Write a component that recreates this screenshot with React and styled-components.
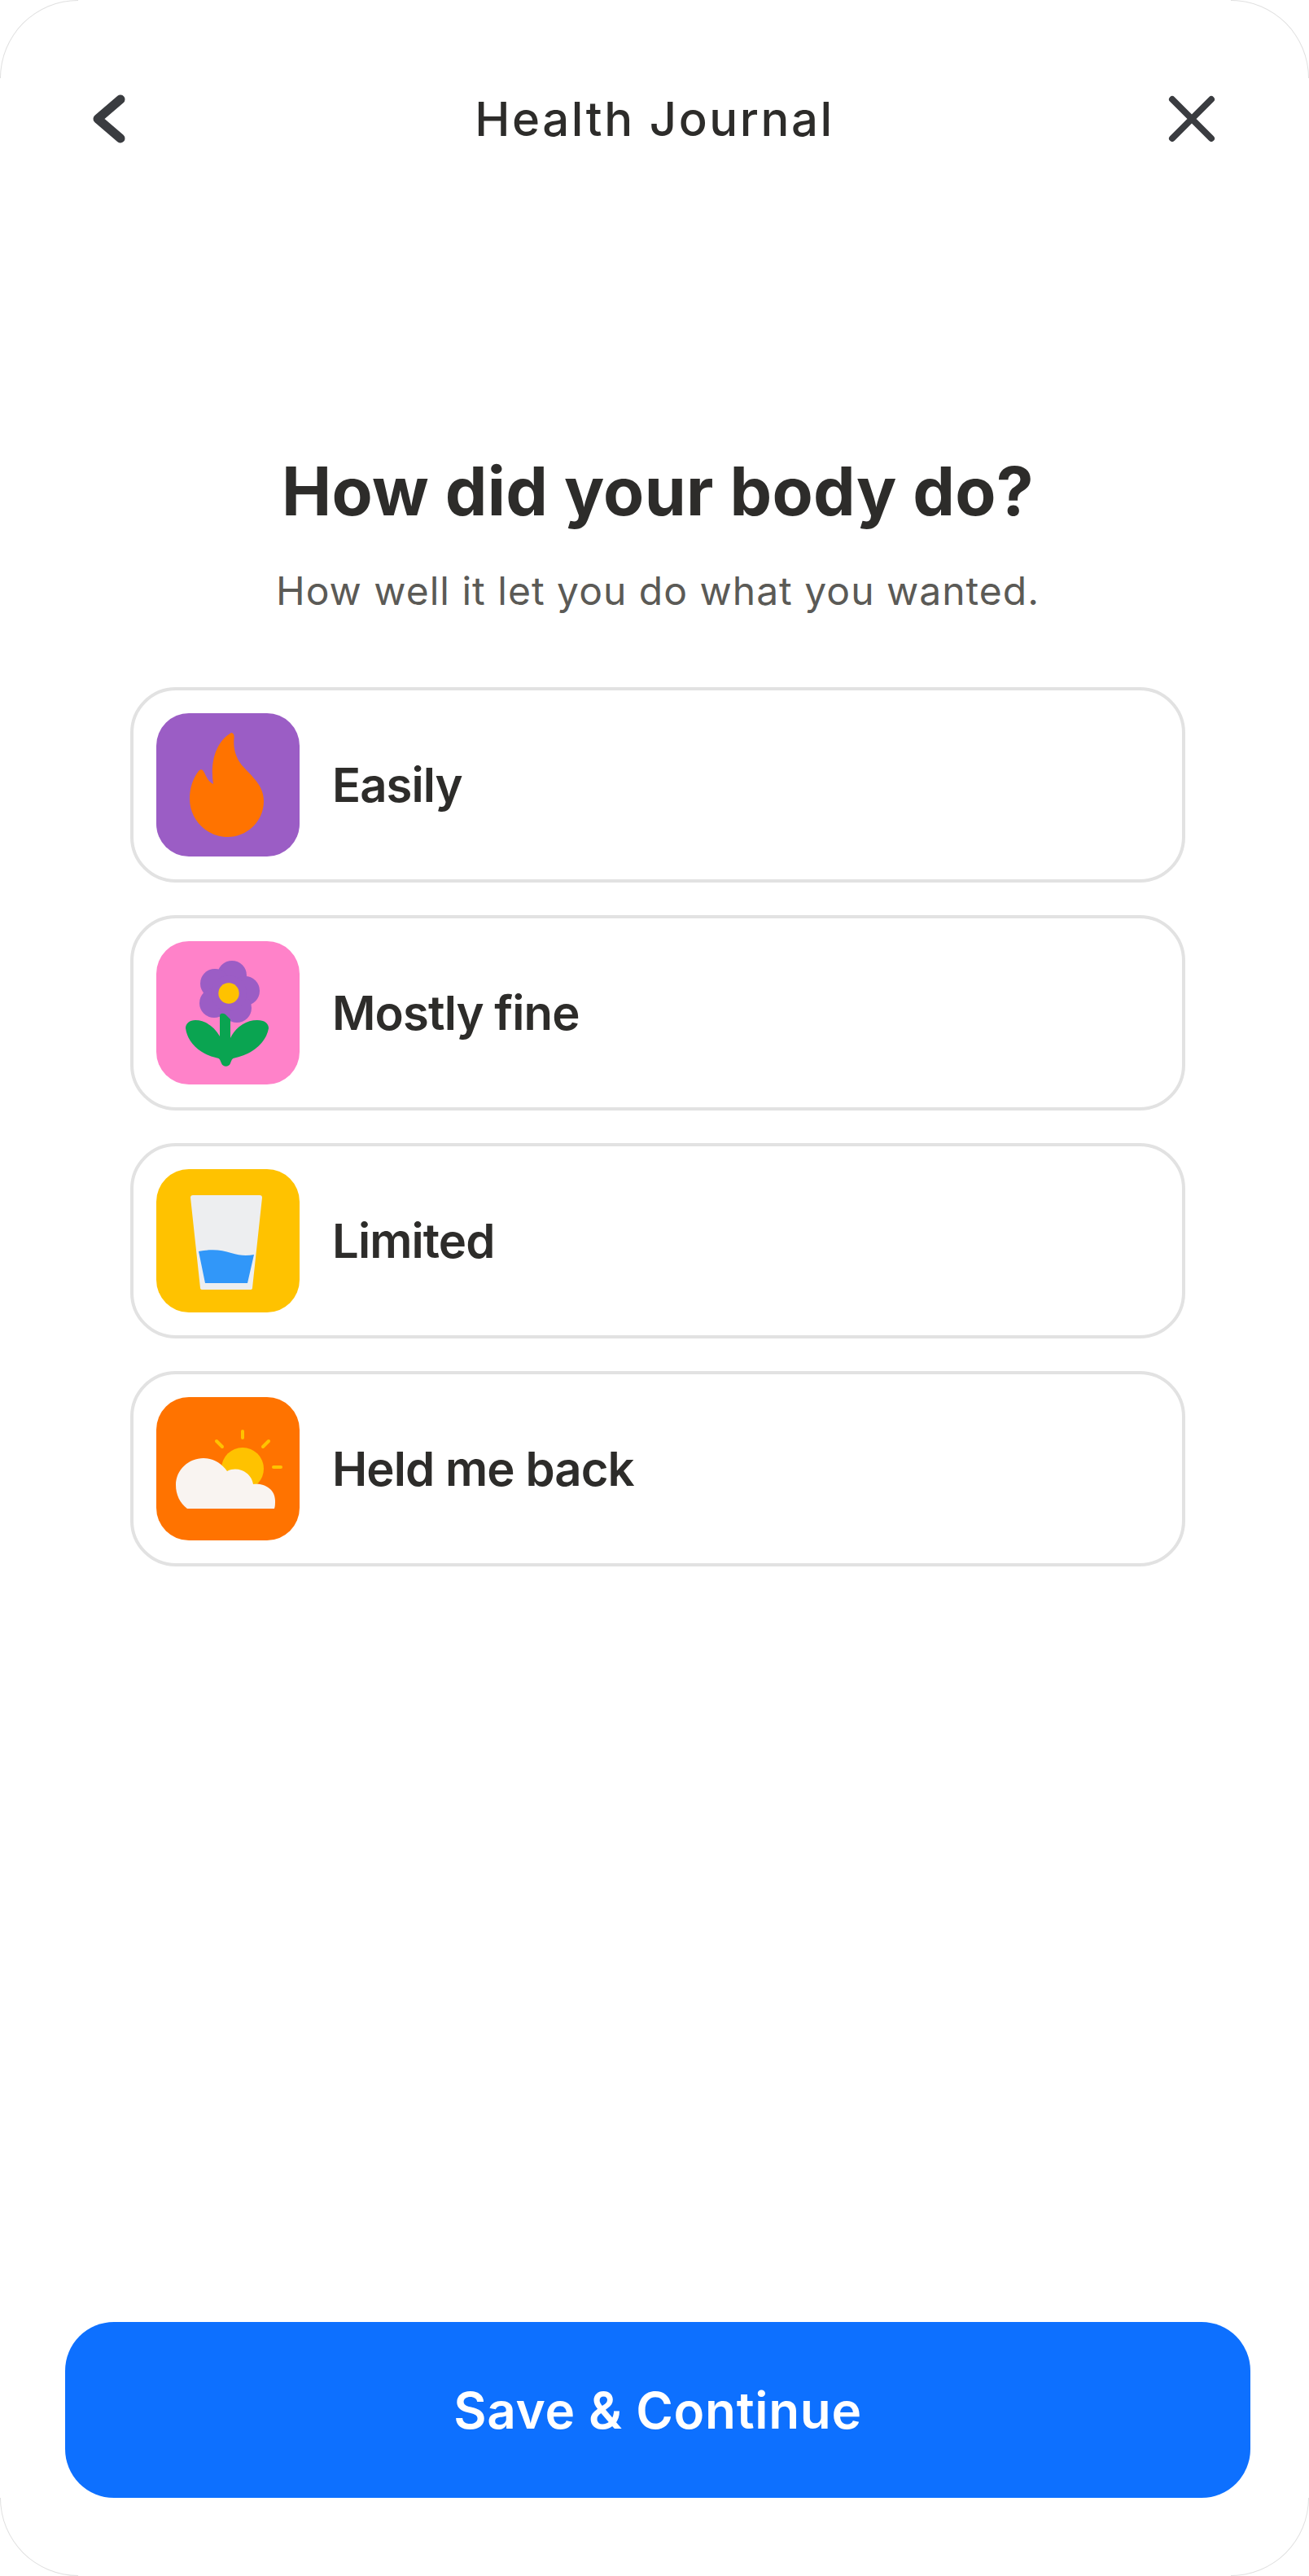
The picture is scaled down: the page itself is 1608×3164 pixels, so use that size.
import React from 'react'
import styled, { createGlobalStyle } from 'styled-components'

const GlobalStyle = createGlobalStyle`
  html, body {
    margin: 0;
    padding: 0;
    background: #ffffff;
  }
  * {
    box-sizing: border-box;
  }
`

const Screen = styled.div`
  position: relative;
  width: 1608px;
  height: 3164px;
  background: #ffffff;
  display: flex;
  flex-direction: column;
  font-family: Inter, "Liberation Sans", sans-serif;
  color: #2d2c2a;
`

// the faint arcs left at the four corners of the phone frame
const Corner = styled.span`
  position: absolute;
  width: 96px;
  height: 96px;
  ${(props) => props.$v}: 0;
  ${(props) => props.$h}: 0;
  border-${(props) => props.$v}: 1px solid #e0e0e0;
  border-${(props) => props.$h}: 1px solid #e0e0e0;
  border-${(props) => props.$v}-${(props) => props.$h}-radius: 96px;
`

const Header = styled.header`
  height: 120px;
  margin-top: 86px;
  padding: 0 112px 0 105px;
  display: flex;
  align-items: center;
  justify-content: space-between;
`

const HeaderTitle = styled.div`
  margin-left: 7px;
  font-size: 58px;
  font-weight: 500;
  letter-spacing: 2.6px;
  color: #2d2c2a;
`

const IconButton = styled.button`
  width: 64px;
  height: 64px;
  padding: 0;
  border: none;
  background: none;
  color: #3a3c40;
  display: flex;
  align-items: center;
  justify-content: center;
`

const Content = styled.main`
  flex: 1;
  display: flex;
  flex-direction: column;
  align-items: center;
  padding: 348px 0 0 8px;
`

const Title = styled.h1`
  margin: 0;
  font-size: 82px;
  line-height: 100px;
  font-weight: 700;
  letter-spacing: 0.3px;
  color: #2d2c2a;
`

const Subtitle = styled.p`
  margin: 40px 0 0;
  font-size: 48px;
  line-height: 64px;
  font-weight: 400;
  letter-spacing: 1px;
  color: #5b5a56;
`

const OptionList = styled.div`
  width: 1296px;
  margin-top: 86px;
  display: flex;
  flex-direction: column;
  gap: 40px;
`

const Option = styled.div`
  height: 240px;
  padding: 28px;
  display: flex;
  align-items: center;
  gap: 40px;
  border: 4px solid #e2e2e2;
  border-radius: 56px;
  background: #ffffff;
`

const OptionIcon = styled.div`
  width: 176px;
  height: 176px;
  flex: none;
  border-radius: 40px;
  background: ${(props) => props.$color};
  display: flex;
  align-items: center;
  justify-content: center;
`

const OptionLabel = styled.span`
  font-size: 58px;
  font-weight: 600;
  letter-spacing: -0.9px;
  color: #2d2c2a;
`

const Footer = styled.footer`
  padding: 0 72px 96px 80px;
`

const SaveButton = styled.button`
  width: 100%;
  height: 216px;
  border: none;
  border-radius: 60px;
  background: #0d70ff;
  color: #ffffff;
  font-family: inherit;
  font-size: 62px;
  font-weight: 600;
  letter-spacing: 0.7px;
`

const BackIcon = () => (
  <svg width="64" height="64" viewBox="0 0 64 64" fill="none">
    <path d="M43 8 L15 32 L43 56" stroke="currentColor" strokeWidth="11" strokeLinecap="round" strokeLinejoin="round" />
  </svg>
)

const CloseIcon = () => (
  <svg width="64" height="64" viewBox="0 0 64 64" fill="none">
    <path d="M8 8 L56 56 M56 8 L8 56" stroke="currentColor" strokeWidth="8" strokeLinecap="round" />
  </svg>
)

const FlameIcon = () => (
  <svg width="176" height="176" viewBox="0 0 176 176">
    <path
      fill="#ff7300"
      d="M92 24 C95 24 96 27 95.500 31 C94 45 99 58 108 67 C120 80 132 90 132 108 C132 134 110 152 88 152 C62 152 41 131 41 105 C41 92 45 80 52 71 C55 68 57 69 59 73 C62 79 64 84 70 87 C66 62 72 36 92 24 Z"
    />
  </svg>
)

const FlowerIcon = () => (
  <svg width="176" height="176" viewBox="0 0 176 176">
    <g fill="#9b5dc5">
      <circle cx="93" cy="42" r="18" />
      <circle cx="72" cy="52" r="18" />
      <circle cx="109" cy="61" r="18" />
      <circle cx="71" cy="76" r="18" />
      <circle cx="99" cy="82" r="18" />
      <circle cx="89" cy="64" r="22" />
    </g>
    <circle cx="89" cy="64" r="12.700" fill="#ffc200" />
    <path
      fill="#0aa451"
      d="M78 92 C78 88 82 88 85 90 L91 96 L91 119 C97 106 110 97 124 97 C133 97 138 101 138 107 C135 125 117 139 98 143 C93 144 93 145 91 150 C89 155 82 155 80 150 C78 145 78 144 73 143 C54 139 38 124 36 107 C36 101 41 97 48 97 C61 97 72 106 78 117 Z"
    />
  </svg>
)

const GlassIcon = () => (
  <svg width="176" height="176" viewBox="0 0 176 176">
    <path
      fill="#edeef0"
      d="M45 32 L127 32 Q130 32 130 35 L118 146 Q118 148 115 148 L57 148 Q54 148 54 146 L42 35 Q42 32 45 32 Z"
    />
    <path
      fill="#3197f9"
      d="M52 101 C68 98 80 99 92 103 C102 106 110 107 120 105 L112 140 L60 140 Z"
    />
  </svg>
)

const CloudIcon = () => (
  <svg width="176" height="176" viewBox="0 0 176 176">
    <circle cx="106" cy="88" r="26" fill="#ffc200" />
    <g stroke="#ffc200" strokeWidth="4" strokeLinecap="round">
      <path d="M106 42 L106 50" />
      <path d="M74 54 L81 61" />
      <path d="M138 54 L131 61" />
      <path d="M144 86 L153 86" />
    </g>
    <path
      fill="#f9f4f1"
      d="M38 137 C29 130 24 120 24 108 C24 89 40 75 58 75 C70 75 80 81 87 91 C93 88 99 88 105 90 C113 93 118 100 119 107 C131 105 146 112 146 127 C146 131 146 134 145 137 Z"
    />
  </svg>
)

const options = [
  { label: 'Easily', color: '#9b5dc5', Icon: FlameIcon },
  { label: 'Mostly fine', color: '#ff82c9', Icon: FlowerIcon },
  { label: 'Limited', color: '#ffc200', Icon: GlassIcon },
  { label: 'Held me back', color: '#ff7300', Icon: CloudIcon },
]

function App() {
  return (
    <Screen>
      <GlobalStyle />
      <Corner $v="top" $h="left" />
      <Corner $v="top" $h="right" />
      <Corner $v="bottom" $h="left" />
      <Corner $v="bottom" $h="right" />

      <Header>
        <IconButton aria-label="Back">
          <BackIcon />
        </IconButton>
        <HeaderTitle>Health Journal</HeaderTitle>
        <IconButton aria-label="Close">
          <CloseIcon />
        </IconButton>
      </Header>

      <Content>
        <Title>How did your body do?</Title>
        <Subtitle>How well it let you do what you wanted.</Subtitle>

        <OptionList>
          {options.map(({ label, color, Icon }) => (
            <Option key={label}>
              <OptionIcon $color={color}>
                <Icon />
              </OptionIcon>
              <OptionLabel>{label}</OptionLabel>
            </Option>
          ))}
        </OptionList>
      </Content>

      <Footer>
        <SaveButton>Save &amp; Continue</SaveButton>
      </Footer>
    </Screen>
  )
}

export default App
